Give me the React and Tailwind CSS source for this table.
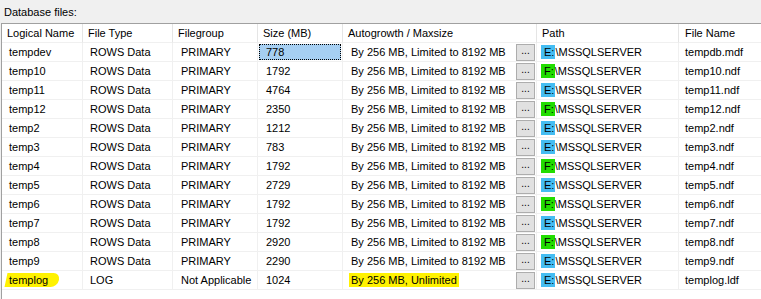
import React from "react";

const rows = [
  ["tempdev", "778", "E", "tempdb.mdf"],
  ["temp10", "1792", "F", "temp10.ndf"],
  ["temp11", "4764", "E", "temp11.ndf"],
  ["temp12", "2350", "F", "temp12.ndf"],
  ["temp2", "1212", "E", "temp2.ndf"],
  ["temp3", "783", "E", "temp3.ndf"],
  ["temp4", "1792", "F", "temp4.ndf"],
  ["temp5", "2729", "E", "temp5.ndf"],
  ["temp6", "1792", "F", "temp6.ndf"],
  ["temp7", "1792", "E", "temp7.ndf"],
  ["temp8", "2920", "F", "temp8.ndf"],
  ["temp9", "2290", "E", "temp9.ndf"],
];

const cols = "grid-cols-[81px_90px_85px_85px_194px_142px_120px]";
const cell = "h-[19px] border-b border-r border-[#f0f0f0] flex items-center whitespace-nowrap overflow-hidden";

function Drive({ letter }) {
  // drive letter is marked with a coloured box in the screenshot
  const bg = letter === "E" ? "bg-[#45bdf2]" : "bg-[#22dd00]";
  return (
    <span className={`${bg} inline-block h-[14px] leading-[14px] pl-[3px] pr-[1px] -ml-[3px]`}>
      {letter}:
    </span>
  );
}

function DotsButton() {
  return (
    <span className="ml-auto mr-[1px] w-[19px] h-[17px] bg-[#e1e1e1] border border-[#adadad] flex items-center justify-center text-[10px] leading-none pb-[2px]">
      ...
    </span>
  );
}

function Row({ name, type, group, size, growth, drive, file, selected, log }) {
  return (
    <>
      <div className={`${cell} pl-[7px]`}>
        {log ? (
          <span className="relative inline-block h-[14px] leading-[14px]">
            {/* hand-drawn marker stroke */}
            <span className="absolute top-0 bottom-0 -left-[3px] -right-[11px] bg-[#fff200] rounded-r-full -skew-x-12"></span>
            <span className="relative">{name}</span>
          </span>
        ) : (
          name
        )}
      </div>
      <div className={`${cell} pl-[7px]`}>{type}</div>
      <div className={`${cell} pl-[8px]`}>{group}</div>
      <div className={`${cell} p-[1px]`}>
        {selected ? (
          <div className="w-full h-full bg-[#a6cff2] border border-dotted border-black pl-[6px] flex items-center">
            {size}
          </div>
        ) : (
          <span className="pl-[7px]">{size}</span>
        )}
      </div>
      <div className={`${cell} pl-[8px]`}>
        {log ? (
          <span className="bg-[#fff200] inline-block h-[14px] leading-[14px] -ml-[2px] px-[2px]">{growth}</span>
        ) : (
          growth
        )}
        <DotsButton />
      </div>
      <div className={`${cell} pl-[7px]`}>
        <Drive letter={drive} />\MSSQLSERVER
      </div>
      <div className={`${cell} pl-[6px]`}>{file}</div>
    </>
  );
}

export default function App() {
  return (
    <div className="w-[761px] h-[299px] overflow-hidden bg-[#f0f0f0] text-black text-[11px] leading-none" style={{ fontFamily: '"Liberation Sans", Arial, sans-serif' }}>
      {/* Label */}
      <div className="h-[23px] pl-[4px] pt-[7px]">Database files:</div>

      {/* Grid */}
      <div className="h-[276px] ml-[1px] bg-white border-t border-l border-[#a0a0a0]">
        <div className={`grid ${cols}`}>
          {["Logical Name", "File Type", "Filegroup", "Size (MB)", "Autogrowth / Maxsize", "Path", "File Name"].map((h, i) => (
            <div key={h} className={`${cell} ${i === 6 ? "pl-[6px]" : "pl-[5px]"} border-r-[#e5e5e5]`}>
              {h}
            </div>
          ))}
          {rows.map(([name, size, drive, file], i) => (
            <Row
              key={name}
              name={name}
              type="ROWS Data"
              group="PRIMARY"
              size={size}
              growth="By 256 MB, Limited to 8192 MB"
              drive={drive}
              file={file}
              selected={i === 0}
            />
          ))}
          <Row
            name="templog"
            type="LOG"
            group="Not Applicable"
            size="1024"
            growth="By 256 MB, Unlimited"
            drive="E"
            file="templog.ldf"
            log
          />
        </div>
      </div>
    </div>
  );
}
